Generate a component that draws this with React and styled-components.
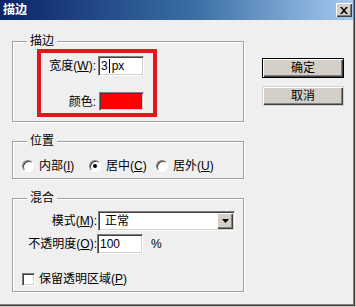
import React from 'react';
import styled, {createGlobalStyle} from 'styled-components';

const GlobalStyle = createGlobalStyle`
  html, body {
    margin: 0;
    padding: 0;
    background: #efefef;
  }
  body {
    font-family: "Liberation Sans", "Noto Sans CJK SC", sans-serif;
    font-size: 12px;
    color: #000;
  }
  * {
    box-sizing: border-box;
  }
`;

const raised = `
  box-shadow: inset 1px 1px 0 #fff, inset -1px -1px 0 #404040, inset -2px -2px 0 #808080;
`;

const sunken = `
  border: 1px solid;
  border-color: #808080 #fff #fff #808080;
  box-shadow: inset 1px 1px 0 #404040, inset -1px -1px 0 #d4d0c8;
`;

export default function App() {
  return (
    <>
      <GlobalStyle />
      <Window>
        <TitleBar>
          <TitleText>描边</TitleText>
          <CloseButton>
            <svg width="8" height="7" viewBox="0 0 8 7">
              <path d="M0 0h2l2 2.2L6 0h2L5 3.5 8 7H6L4 4.8 2 7H0l3-3.5z" fill="#000" />
            </svg>
          </CloseButton>
        </TitleBar>

        <Body>
          <LeftColumn>
            <Group $height={81}>
              <Legend>描边</Legend>
              <Highlight>
                <Label>宽度(<u>W</u>):</Label>
                <TextField>
                  <span>3</span>
                  <Caret />
                  <span>px</span>
                </TextField>
                <Label>颜色:</Label>
                <Swatch $color="#ff0000" />
              </Highlight>
            </Group>

            <Group $height={38}>
              <Legend>位置</Legend>
              <RadioRow>
                <RadioItem>
                  <Radio />
                  <span>内部(<u>I</u>)</span>
                </RadioItem>
                <RadioItem>
                  <Radio $checked />
                  <span>居中(<u>C</u>)</span>
                </RadioItem>
                <RadioItem>
                  <Radio />
                  <span>居外(<u>U</u>)</span>
                </RadioItem>
              </RadioRow>
            </Group>

            <Group $height={94}>
              <Legend>混合</Legend>
              <BlendGrid>
                <Label>模式(<u>M</u>):</Label>
                <Select>
                  <span>正常</span>
                  <DropButton>
                    <svg width="7" height="4" viewBox="0 0 7 4">
                      <path d="M0 0h7L3.5 4z" fill="#000" />
                    </svg>
                  </DropButton>
                </Select>
                <Label>不透明度(<u>O</u>):</Label>
                <OpacityCell>
                  <TextField>
                    <span>100</span>
                  </TextField>
                  <span>%</span>
                </OpacityCell>
              </BlendGrid>
              <CheckRow>
                <CheckBox />
                <span>保留透明区域(<u>P</u>)</span>
              </CheckRow>
            </Group>
          </LeftColumn>

          <RightColumn>
            <Button $default>确定</Button>
            <Button>取消</Button>
          </RightColumn>
        </Body>
      </Window>
    </>
  );
}

const Window = styled.div`
  width: 356px;
  height: 307px;
  display: flex;
  flex-direction: column;
  padding: 0 3px 2px 0;
  background: #efefef;
  box-shadow: inset -1px -1px 0 #d4d0c8, inset -2px -2px 0 #404040, inset -3px -3px 0 #808080;
`;

const TitleBar = styled.div`
  height: 20px;
  display: flex;
  align-items: center;
  justify-content: space-between;
  padding: 0 1px 0 3px;
  background: linear-gradient(to right, #0a246a, #3a6ea5 55%, #a6caf0);
`;

const TitleText = styled.span`
  color: #fff;
  font-weight: 700;
  font-size: 12px;
  line-height: 14px;
`;

const CloseButton = styled.div`
  width: 16px;
  height: 14px;
  display: flex;
  align-items: center;
  justify-content: center;
  background: #d4d0c8;
  ${raised}
`;

const Body = styled.div`
  flex: 1;
  display: flex;
  padding: 21px 0 0 12px;
`;

const LeftColumn = styled.div`
  width: 232px;
  display: flex;
  flex-direction: column;
  gap: 19px;
`;

const RightColumn = styled.div`
  display: flex;
  flex-direction: column;
  gap: 8px;
  margin-left: 18px;
  padding-top: 17px;
`;

const Group = styled.div`
  position: relative;
  height: ${p => p.$height}px;
  border: 1px solid #a0a0a0;
  box-shadow: inset 1px 1px 0 #fff, 1px 1px 0 #fff;
`;

const Legend = styled.span`
  position: absolute;
  top: -8px;
  left: 14px;
  padding: 0 3px;
  background: #efefef;
  line-height: 14px;
  font-size: 12px;
`;

const Highlight = styled.div`
  width: 120px;
  height: 68px;
  margin: 7px 0 0 24px;
  border: 4px solid #e3161c;
  display: grid;
  grid-template-columns: 55px 45px;
  grid-template-rows: 20px 19px;
  column-gap: 2px;
  row-gap: 16px;
  align-items: center;
  padding-top: 3px;
`;

const Label = styled.span`
  text-align: right;
  line-height: 14px;
  white-space: nowrap;
`;

const TextField = styled.div`
  width: 46px;
  height: 20px;
  display: flex;
  align-items: center;
  padding-left: 2px;
  background: #fff;
  line-height: 14px;
  ${sunken}
`;

const Caret = styled.span`
  display: inline-block;
  width: 1px;
  height: 14px;
  margin: 0 2px 0 1px;
  background: #000;
`;

const Swatch = styled.div`
  width: 45px;
  height: 19px;
  margin-left: 1px;
  background: ${p => p.$color};
  ${sunken}
`;

const RadioRow = styled.div`
  display: grid;
  grid-template-columns: repeat(3, 67px);
  padding: 17px 0 0 9px;
`;

const RadioItem = styled.label`
  display: flex;
  align-items: center;
  gap: 5px;
  line-height: 14px;
  white-space: nowrap;
`;

const Radio = styled.span`
  position: relative;
  width: 12px;
  height: 12px;
  flex: none;
  border-radius: 50%;
  background: #fff;
  border: 1px solid;
  border-color: #808080 #fff #fff #808080;
  box-shadow: inset 1px 1px 0 #404040;
  &::after {
    content: '';
    display: ${p => (p.$checked ? 'block' : 'none')};
    position: absolute;
    left: 3px;
    top: 3px;
    width: 4px;
    height: 4px;
    border-radius: 50%;
    background: #000;
  }
`;

const BlendGrid = styled.div`
  display: grid;
  grid-template-columns: 76px auto;
  grid-auto-rows: 20px;
  column-gap: 1px;
  row-gap: 3px;
  align-items: center;
  padding: 12px 0 0 8px;
`;

const Select = styled.div`
  width: 137px;
  height: 20px;
  display: flex;
  align-items: center;
  justify-content: space-between;
  padding: 0 1px 0 6px;
  background: #fff;
  line-height: 14px;
  ${sunken}
`;

const DropButton = styled.div`
  width: 16px;
  height: 16px;
  display: flex;
  align-items: center;
  justify-content: center;
  background: #d4d0c8;
  ${raised}
`;

const OpacityCell = styled.div`
  display: flex;
  align-items: center;
  gap: 8px;
  margin-left: -1px;
`;

const CheckRow = styled.label`
  display: flex;
  align-items: center;
  gap: 4px;
  margin: 18px 0 0 9px;
  line-height: 14px;
`;

const CheckBox = styled.span`
  width: 13px;
  height: 13px;
  background: #fff;
  ${sunken}
`;

const Button = styled.button`
  width: 82px;
  height: 20px;
  padding: 0;
  font-family: "Liberation Sans", "Noto Sans CJK SC", sans-serif;
  font-size: 12px;
  line-height: 14px;
  color: #000;
  background: #d4d0c8;
  border: 1px solid ${p => (p.$default ? '#000' : 'transparent')};
  ${raised}
`;
